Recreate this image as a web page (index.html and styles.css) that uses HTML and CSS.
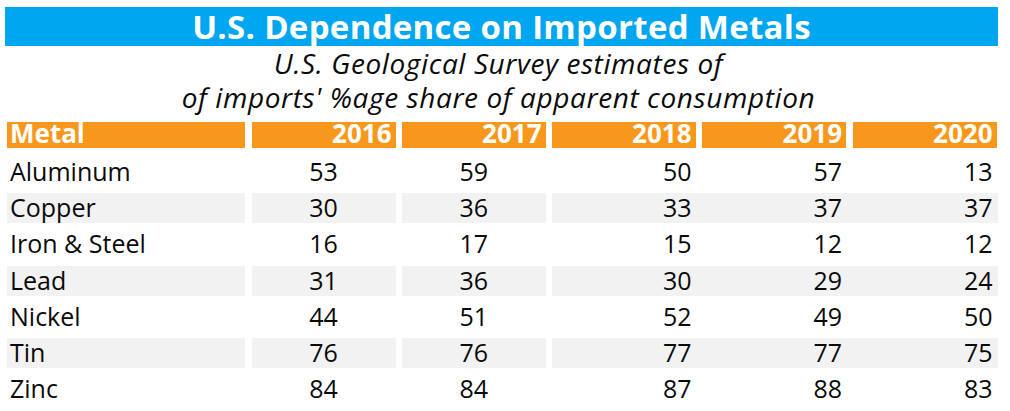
FILE: index.html
```html
<!DOCTYPE html>
<html>
<head>
<meta charset="utf-8">
<link rel="stylesheet" href="styles.css">
</head>
<body>
<div class="page">
  <h1 class="title">U.S. Dependence on Imported Metals</h1>
  <p class="subtitle">U.S. Geological Survey estimates of<br>of imports' %age share of apparent consumption</p>
  <div class="table">
    <div class="row head">
      <div class="cell name">Metal</div>
      <div class="cell yr">2016</div>
      <div class="cell yr">2017</div>
      <div class="group">
        <div class="cell yr">2018</div>
        <div class="cell yr">2019</div>
        <div class="cell yr">2020</div>
      </div>
    </div>
    <div class="row">
      <div class="cell name">Aluminum</div>
      <div class="cell mid">53</div>
      <div class="cell mid">59</div>
      <div class="group">
        <div class="cell rt">50</div>
        <div class="cell rt">57</div>
        <div class="cell rt">13</div>
      </div>
    </div>
    <div class="row alt">
      <div class="cell name">Copper</div>
      <div class="cell mid">30</div>
      <div class="cell mid">36</div>
      <div class="group">
        <div class="cell rt">33</div>
        <div class="cell rt">37</div>
        <div class="cell rt">37</div>
      </div>
    </div>
    <div class="row">
      <div class="cell name">Iron &amp; Steel</div>
      <div class="cell mid">16</div>
      <div class="cell mid">17</div>
      <div class="group">
        <div class="cell rt">15</div>
        <div class="cell rt">12</div>
        <div class="cell rt">12</div>
      </div>
    </div>
    <div class="row alt">
      <div class="cell name">Lead</div>
      <div class="cell mid">31</div>
      <div class="cell mid">36</div>
      <div class="group">
        <div class="cell rt">30</div>
        <div class="cell rt">29</div>
        <div class="cell rt">24</div>
      </div>
    </div>
    <div class="row">
      <div class="cell name">Nickel</div>
      <div class="cell mid">44</div>
      <div class="cell mid">51</div>
      <div class="group">
        <div class="cell rt">52</div>
        <div class="cell rt">49</div>
        <div class="cell rt">50</div>
      </div>
    </div>
    <div class="row alt">
      <div class="cell name">Tin</div>
      <div class="cell mid">76</div>
      <div class="cell mid">76</div>
      <div class="group">
        <div class="cell rt">77</div>
        <div class="cell rt">77</div>
        <div class="cell rt">75</div>
      </div>
    </div>
    <div class="row">
      <div class="cell name">Zinc</div>
      <div class="cell mid">84</div>
      <div class="cell mid">84</div>
      <div class="group">
        <div class="cell rt">87</div>
        <div class="cell rt">88</div>
        <div class="cell rt">83</div>
      </div>
    </div>
  </div>
</div>
</body>
</html>
```

FILE: styles.css
```css
html, body {
  margin: 0;
  padding: 0;
  background: #ffffff;
}

.page {
  width: 1010px;
  padding-top: 7px;
  font-family: "Open Sans", "Noto Sans", sans-serif;
  color: #0a0a0a;
}

.title {
  margin: 0 12px 0 5px;
  height: 39px;
  background: #00a6ef;
  color: #ffffff;
  font-size: 33px;
  font-weight: 700;
  letter-spacing: 0.3px;
  line-height: 39px;
  text-align: center;
}

.subtitle {
  margin: 0;
  padding-right: 13px;
  font-size: 28px;
  font-style: italic;
  letter-spacing: 0.6px;
  line-height: 34px;
  text-align: center;
  color: #0a0a0a;
}

.table {
  margin: 8px 0 0 7px;
  width: 991px;
  display: flex;
  flex-direction: column;
  gap: 6.25px;
}

.row {
  display: grid;
  grid-template-columns: 238px 144px 143.5px 1fr;
  column-gap: 6.5px;
  height: 30px;
}

.group {
  display: grid;
  grid-template-columns: 143.5px 144px 144px;
  column-gap: 6.5px;
}

.cell {
  font-size: 25px;
  line-height: 29px;
  white-space: nowrap;
}

.name {
  padding-left: 3px;
  text-align: left;
}

.mid {
  text-align: center;
}

.rt {
  text-align: right;
  padding-right: 4px;
}

.head {
  height: 26px;
  margin-bottom: 2.5px;
}

.head .cell {
  background: #f7981d;
  color: #ffffff;
  font-weight: 700;
  font-size: 26px;
  line-height: 22px;
  height: 26px;
}

.head .yr {
  text-align: right;
  padding-right: 4px;
}

.alt .name,
.alt .mid,
.alt .group {
  background: #f2f2f2;
}
```
